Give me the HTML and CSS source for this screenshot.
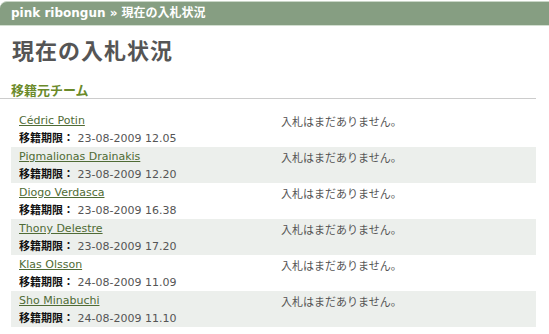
FILE: index.html
```html
<!DOCTYPE html>
<html lang="ja">
<head>
<meta charset="utf-8">
<link rel="stylesheet" href="styles.css">
</head>
<body>
<div class="header">pink ribongun » 現在の入札状況</div>
<div class="content">
  <h1 class="title">現在の入札状況</h1>
  <h2 class="section">移籍元チーム</h2>
  <table class="bids">
    <tr>
      <td class="player"><div class="line"><a href="#">Cédric Potin</a></div><div class="line deadline"><b>移籍期限：</b> 23-08-2009 12.05</div></td>
      <td class="status"><div class="line">入札はまだありません。</div></td>
    </tr>
    <tr class="alt">
      <td class="player"><div class="line"><a href="#">Pigmalionas Drainakis</a></div><div class="line deadline"><b>移籍期限：</b> 23-08-2009 12.20</div></td>
      <td class="status"><div class="line">入札はまだありません。</div></td>
    </tr>
    <tr>
      <td class="player"><div class="line"><a href="#">Diogo Verdasca</a></div><div class="line deadline"><b>移籍期限：</b> 23-08-2009 16.38</div></td>
      <td class="status"><div class="line">入札はまだありません。</div></td>
    </tr>
    <tr class="alt">
      <td class="player"><div class="line"><a href="#">Thony Delestre</a></div><div class="line deadline"><b>移籍期限：</b> 23-08-2009 17.20</div></td>
      <td class="status"><div class="line">入札はまだありません。</div></td>
    </tr>
    <tr>
      <td class="player"><div class="line"><a href="#">Klas Olsson</a></div><div class="line deadline"><b>移籍期限：</b> 24-08-2009 11.09</div></td>
      <td class="status"><div class="line">入札はまだありません。</div></td>
    </tr>
    <tr class="alt">
      <td class="player"><div class="line"><a href="#">Sho Minabuchi</a></div><div class="line deadline"><b>移籍期限：</b> 24-08-2009 11.10</div></td>
      <td class="status"><div class="line">入札はまだありません。</div></td>
    </tr>
  </table>
</div>
</body>
</html>
```
FILE: styles.css
```css
html, body {
  margin: 0;
  padding: 0;
  background: #fff;
}
body {
  font-family: "DejaVu Sans", Verdana, "Noto Sans CJK JP", sans-serif;
  font-size: 11px;
  color: #555;
}
.header {
  margin-top: 1px;
  height: 23px;
  line-height: 23px;
  background: #869e82;
  border-top: 1px solid #c9d6c7;
  border-bottom: 1px solid #d3dfd1;
  border-top-left-radius: 7px;
  color: #fff;
  font-weight: bold;
  font-size: 12px;
  padding-left: 11px;
  overflow: hidden;
  font-family: "DejaVu Sans", "Noto Sans CJK JP", sans-serif;
}
.content {
  padding: 0 13px 0 11px;
}
.title {
  margin: 8px 0 0 1px;
  font-size: 22px;
  line-height: 30px;
  font-weight: bold;
  color: #555;
  font-family: "Noto Sans CJK JP", sans-serif;
  letter-spacing: 1px;
}
.section {
  margin: 18px 0 12px -11px;
  padding-left: 11px;
  font-size: 13px;
  line-height: 16px;
  height: 16px;
  font-weight: bold;
  color: #6b8a2a;
  border-bottom: 1px solid #cccccc;
  font-family: "Noto Sans CJK JP", sans-serif;
}
.bids {
  width: 100%;
  border-collapse: collapse;
}
.bids td {
  vertical-align: top;
  padding: 2px 8px;
  height: 32px;
}
.bids tr.alt td {
  background: #ecefec;
}
.line {
  height: 16px;
  line-height: 16px;
  overflow: hidden;
  white-space: nowrap;
}
.player {
  width: 246px;
}
.player a {
  color: #4f6b35;
  text-decoration: underline;
}
.deadline {
  color: #555;
}
.deadline b {
  color: #111;
  font-family: "Noto Sans CJK JP", sans-serif;
  font-weight: bold;
}
.status {
  color: #555;
  font-family: "Noto Sans CJK JP", sans-serif;
}
```
